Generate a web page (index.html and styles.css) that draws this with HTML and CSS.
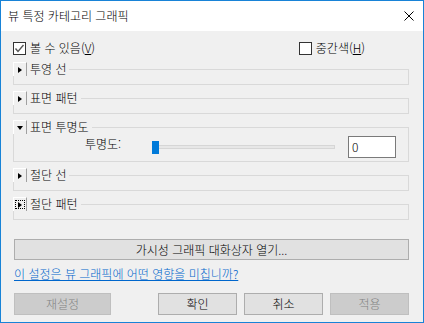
FILE: index.html
```html
<!DOCTYPE html>
<html lang="ko">
<head>
    <meta charset="UTF-8">
    <title>뷰 특정 카테고리 그래픽</title>
    <link rel="stylesheet" href="styles.css">
</head>
<body>

    <div class="window">
        <div class="titlebar">
            <span class="title">뷰 특정 카테고리 그래픽</span>
            <svg class="close" width="10" height="10" viewBox="0 0 10 10">
                <path d="M0.5 0.5 L9.5 9.5 M9.5 0.5 L0.5 9.5" stroke="#000" stroke-width="1" fill="none"/>
            </svg>
        </div>

        <div class="content">
            <div class="checks">
                <label class="check">
                    <span class="box">
                        <svg width="11" height="11" viewBox="0 0 11 11">
                            <path d="M1.5 5.5 L4 8.5 L9.5 2" stroke="#555" stroke-width="1.4" fill="none"/>
                        </svg>
                    </span>
                    볼 수 있음(<u>V</u>)
                </label>
                <label class="check check-right">
                    <span class="box"></span>
                    중간색(<u>H</u>)
                </label>
            </div>

            <fieldset class="group">
                <legend><span class="toggle"><i class="tri-right"></i></span>투영 선</legend>
                <div class="group-body"></div>
            </fieldset>

            <fieldset class="group">
                <legend><span class="toggle"><i class="tri-right"></i></span>표면 패턴</legend>
                <div class="group-body"></div>
            </fieldset>

            <fieldset class="group">
                <legend><span class="toggle"><i class="tri-down"></i></span>표면 투명도</legend>
                <div class="opacity-row">
                    <span class="opacity-label">투명도:</span>
                    <div class="slider">
                        <div class="track"></div>
                        <div class="thumb"></div>
                    </div>
                    <div class="num-input">0</div>
                </div>
            </fieldset>

            <fieldset class="group">
                <legend><span class="toggle"><i class="tri-right"></i></span>절단 선</legend>
                <div class="group-body"></div>
            </fieldset>

            <fieldset class="group">
                <legend><span class="toggle"><span class="focus"><i class="tri-right"></i></span></span>절단 패턴</legend>
                <div class="group-body"></div>
            </fieldset>

            <button class="btn btn-wide">가시성 그래픽 대화상자 열기...</button>

            <a class="help-link" href="#">이 설정은 뷰 그래픽에 어떤 영향을 미칩니까?</a>

            <div class="actions">
                <button class="btn btn-reset" disabled>재설정</button>
                <button class="btn">확인</button>
                <button class="btn">취소</button>
                <button class="btn" disabled>적용</button>
            </div>
        </div>
    </div>

</body>
</html>
```

FILE: styles.css
```css
* {
    box-sizing: border-box;
}

body {
    margin: 0;
    font-family: "Noto Sans CJK KR", "Noto Sans", sans-serif;
    font-size: 12px;
    font-weight: 300;
    color: #000;
    background-color: #f0f0f0;
}

.window {
    width: 424px;
    height: 323px;
    border: 1px solid #1883d7;
    background-color: #f0f0f0;
    overflow: hidden;
}

.titlebar {
    height: 30px;
    background-color: #fff;
    display: flex;
    align-items: center;
    justify-content: space-between;
    padding: 0 9px 0 7px;
}

.title {
    line-height: 14px;
}

.content {
    padding: 10px 14px 0 12px;
    display: flex;
    flex-direction: column;
}

.checks {
    display: flex;
    align-items: center;
    height: 14px;
    margin-bottom: 7px;
}

.check {
    display: flex;
    align-items: center;
    line-height: 14px;
}

.check-right {
    margin-left: auto;
    margin-right: 44px;
}

.box {
    width: 13px;
    height: 13px;
    border: 1px solid #333;
    background-color: #fff;
    margin-right: 4px;
    display: flex;
    align-items: center;
    justify-content: center;
}

.check u {
    text-decoration-thickness: 1px;
}

/* group boxes */
.group {
    margin: 0 0 6px 0;
    padding: 0;
    border: 1px solid #d9d9d9;
    min-width: 0;
}

.group legend {
    display: flex;
    align-items: center;
    padding: 0 3px 0 0;
    margin-left: -1px;
    height: 14px;
    line-height: 14px;
}

.toggle {
    width: 14px;
    height: 14px;
    margin-right: 3px;
    border-top: 1px solid #fff;
    border-left: 1px solid #fff;
    border-right: 1px solid #a0a0a0;
    background-color: #f0f0f0;
    display: flex;
    align-items: center;
    justify-content: center;
}

.tri-right {
    width: 0;
    height: 0;
    border-top: 3.5px solid transparent;
    border-bottom: 3.5px solid transparent;
    border-left: 4px solid #000;
}

.tri-down {
    width: 0;
    height: 0;
    border-left: 3.5px solid transparent;
    border-right: 3.5px solid transparent;
    border-top: 4px solid #000;
}

.focus {
    width: 10px;
    height: 9px;
    border: 1px dotted #000;
    display: flex;
    align-items: center;
    justify-content: center;
}

.group-body {
    height: 8px;
}

.opacity-row {
    display: flex;
    align-items: center;
    padding: 2px 12px 3px 71px;
}

.opacity-label {
    width: 67px;
    align-self: flex-start;
    margin-top: 1px;
    line-height: 14px;
}

.slider {
    flex: 1;
    position: relative;
    height: 12px;
    margin-right: 13px;
    display: flex;
    align-items: center;
}

.track {
    width: 100%;
    height: 4px;
    border: 1px solid #d6d6d6;
    background-color: #e7e7e7;
}

.thumb {
    position: absolute;
    left: 0;
    top: 0;
    width: 7px;
    height: 13px;
    background-color: #007ad9;
}

.num-input {
    width: 48px;
    height: 22px;
    border: 1px solid #7a7a7a;
    background-color: #fff;
    padding: 2px 0 0 3px;
    line-height: 16px;
}

/* buttons */
.btn {
    font-family: inherit;
    font-size: 12px;
    font-weight: 300;
    color: #000;
    background-color: #e1e1e1;
    border: 1px solid #adadad;
    height: 22px;
    width: 79px;
    padding: 0;
    line-height: 18px;
}

.btn:disabled {
    background-color: #cccccc;
    border-color: #bfbfbf;
    color: #838383;
}

.btn-wide {
    width: 395px;
    height: 21px;
    margin: 13px 0 0 1px;
}

.help-link {
    color: #0066cc;
    text-decoration: underline;
    line-height: 14px;
    margin: 7px 0 0 1px;
    align-self: flex-start;
}

.actions {
    display: flex;
    gap: 7px;
    margin: 12px 0 0 1px;
}

.btn-reset {
    width: 97px;
    margin-right: auto;
}
```
